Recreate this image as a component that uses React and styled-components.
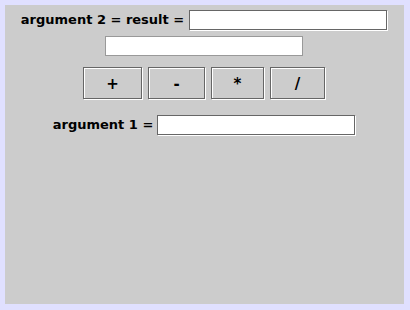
import React from "react";
import styled, { createGlobalStyle } from "styled-components";

const GlobalStyle = createGlobalStyle`
  html, body {
    margin: 0;
    padding: 0;
    background: #e0e0ff;
  }
  body {
    padding: 5px;
    font-family: "DejaVu Sans", "Liberation Sans", sans-serif;
  }
`;

const Panel = styled.div`
  width: 399px;
  height: 299px;
  box-sizing: border-box;
  background: #cccccc;
  padding-top: 5px;
  display: flex;
  flex-direction: column;
  align-items: center;
`;

const Row = styled.div`
  display: flex;
  align-items: center;
  justify-content: center;
  gap: ${(p) => p.$gap || 5}px;
  margin-top: ${(p) => p.$top || 0}px;
  height: ${(p) => p.$height || 20}px;
`;

const Label = styled.span`
  font-size: 13px;
  font-weight: bold;
  color: #000;
  white-space: nowrap;
  line-height: 20px;
`;

const Field = styled.input`
  width: 198px;
  height: 20px;
  box-sizing: border-box;
  margin: 0 1px 1px 0;
  padding: 0 3px;
  background: #fff;
  border: 1px solid ${(p) => (p.$plain ? "#999999" : "#666666")};
  box-shadow: ${(p) => (p.$plain ? "none" : "1px 1px 0 #ffffff")};
  outline: none;
  font: 13px "DejaVu Sans", sans-serif;
`;

const Button = styled.button`
  width: ${(p) => p.$w}px;
  height: 32px;
  box-sizing: border-box;
  margin: 0 1px 1px 0;
  padding: 2px 0 0;
  background: #cccccc;
  border: 1px solid #666666;
  box-shadow: inset 1px 1px 0 #ffffff, 1px 1px 0 #ffffff;
  font: bold 15px "DejaVu Sans", sans-serif;
  color: #000;
  cursor: pointer;
`;

const ops = [
  { sym: "+", w: 59 },
  { sym: "-", w: 57 },
  { sym: "*", w: 53 },
  { sym: "/", w: 55 },
];

export default function App() {
  return (
    <>
      <GlobalStyle />
      <Panel>
        <Row>
          <Label>argument 2 = result =</Label>
          <Field type="text" />
        </Row>
        <Row $top={6}>
          <Field type="text" $plain />
        </Row>
        <Row $top={11} $height={32} $gap={5}>
          {ops.map((o) => (
            <Button key={o.sym} $w={o.w}>
              {o.sym}
            </Button>
          ))}
        </Row>
        <Row $top={16} $gap={4}>
          <Label>argument 1 =</Label>
          <Field type="text" />
        </Row>
      </Panel>
    </>
  );
}
